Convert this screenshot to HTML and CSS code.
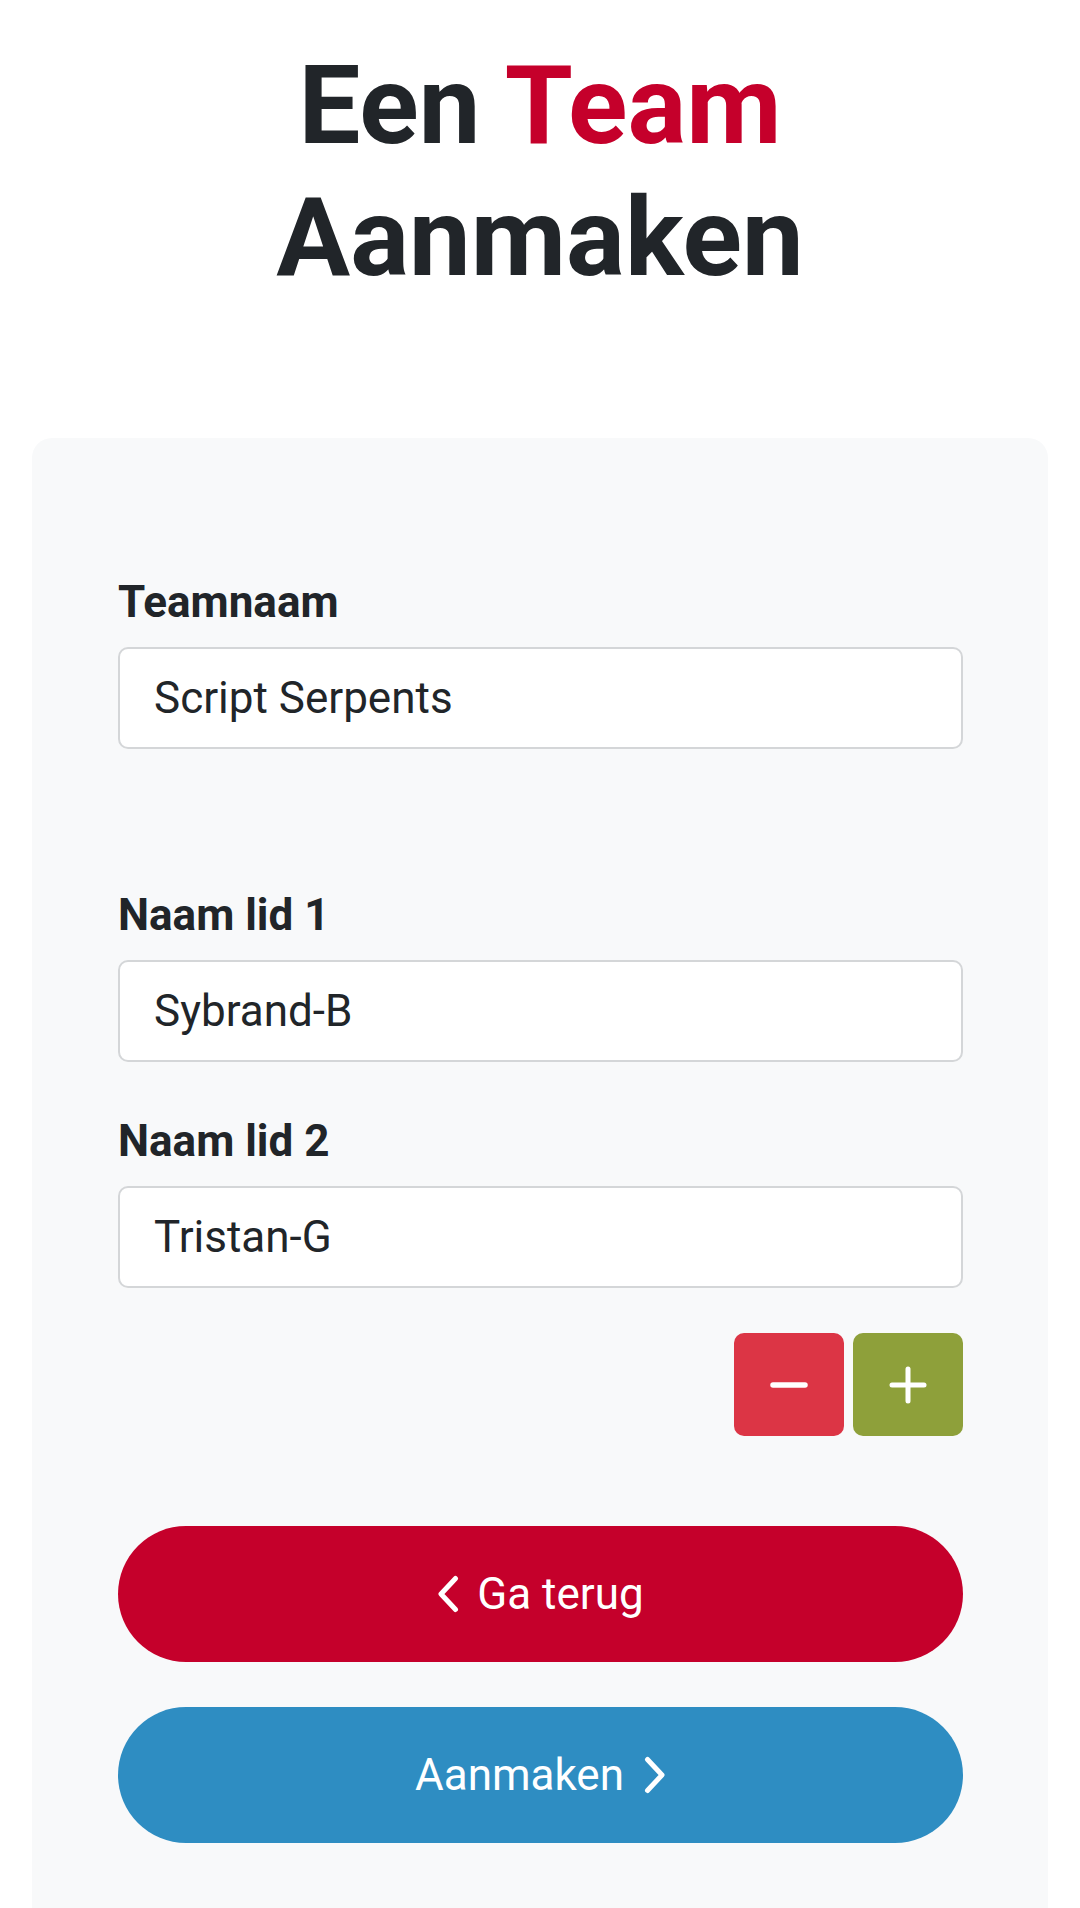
FILE: index.html
```html
<!DOCTYPE html>
<html lang="nl">
<head>
<meta charset="utf-8">
<title>Een Team Aanmaken</title>
<link rel="stylesheet" href="styles.css">
</head>
<body>
<h1 class="title">Een <span class="accent">Team</span><br>Aanmaken</h1>
<main class="card">
  <form class="form">
    <div class="group">
      <label class="label" for="team">Teamnaam</label>
      <input class="field" id="team" type="text" value="Script Serpents">
    </div>
    <div class="group group-first-member">
      <label class="label" for="lid1">Naam lid 1</label>
      <input class="field" id="lid1" type="text" value="Sybrand-B">
    </div>
    <div class="group group-member">
      <label class="label" for="lid2">Naam lid 2</label>
      <input class="field" id="lid2" type="text" value="Tristan-G">
    </div>
    <div class="counter">
      <button type="button" class="square square-minus" aria-label="Verwijder lid">
        <svg width="38" height="8" viewBox="0 0 38 8"><line x1="3" y1="4" x2="35" y2="4" stroke="#fff" stroke-width="5.5" stroke-linecap="round"/></svg>
      </button>
      <button type="button" class="square square-plus" aria-label="Voeg lid toe">
        <svg width="38" height="38" viewBox="0 0 38 38"><line x1="3" y1="19" x2="35" y2="19" stroke="#fff" stroke-width="5" stroke-linecap="round"/><line x1="19" y1="3" x2="19" y2="35" stroke="#fff" stroke-width="5" stroke-linecap="round"/></svg>
      </button>
    </div>
    <button type="button" class="pill pill-back">
      <svg class="chev" width="22" height="38" viewBox="0 0 22 38"><polyline points="18.5,3.5 4,19 18.5,34.5" fill="none" stroke="#fff" stroke-width="5" stroke-linecap="round" stroke-linejoin="round"/></svg>
      <span>Ga terug</span>
    </button>
    <button type="button" class="pill pill-create">
      <span>Aanmaken</span>
      <svg class="chev" width="22" height="38" viewBox="0 0 22 38"><polyline points="3.5,3.5 18,19 3.5,34.5" fill="none" stroke="#fff" stroke-width="5" stroke-linecap="round" stroke-linejoin="round"/></svg>
    </button>
  </form>
</main>
</body>
</html>
```

FILE: styles.css
```css
* { box-sizing: border-box; }

html, body {
  margin: 0;
  padding: 0;
  background: #ffffff;
}

body {
  font-family: Roboto, "Liberation Sans", Arial, sans-serif;
  color: #212529;
  overflow: hidden;
  height: 1908px;
}

.title {
  margin: 40px 0 0;
  font-size: 110px;
  line-height: 132px;
  font-weight: 700;
  text-align: center;
  color: #212529;
}

.accent {
  color: #c5002b;
}

.card {
  margin: 134px 32px 0 32px;
  background: #f8f9fa;
  border-radius: 20px;
  padding: 131px 85px 120px 86px;
}

.form {
  display: flex;
  flex-direction: column;
}

.group {
  display: flex;
  flex-direction: column;
}

.group-first-member {
  margin-top: 133px;
}

.group-member {
  margin-top: 46px;
}

.label {
  font-size: 44px;
  line-height: 66px;
  font-weight: 700;
  margin-bottom: 12px;
  color: #212529;
}

.field {
  width: 100%;
  height: 102px;
  border: 2px solid #d4d6d8;
  border-radius: 10px;
  background: #ffffff;
  padding: 0 34px;
  font-family: Roboto, "Liberation Sans", Arial, sans-serif;
  font-size: 44px;
  line-height: 66px;
  color: #212529;
  outline: none;
}

.counter {
  margin-top: 45px;
  display: flex;
  justify-content: flex-end;
  gap: 9px;
}

.square {
  width: 110px;
  height: 103px;
  border: none;
  border-radius: 10px;
  display: flex;
  align-items: center;
  justify-content: center;
  padding: 0;
}

.square-minus { background: #dc3545; }
.square-plus { background: #8ea03a; }

.pill {
  width: 100%;
  height: 136px;
  border: none;
  border-radius: 68px;
  display: flex;
  align-items: center;
  justify-content: center;
  gap: 18px;
  font-family: Roboto, "Liberation Sans", Arial, sans-serif;
  font-size: 44px;
  line-height: 66px;
  color: #ffffff;
  padding: 0;
}

.pill-back {
  margin-top: 90px;
  background: #c5002b;
}

.pill-create {
  margin-top: 45px;
  background: #2e8dc2;
  gap: 20px;
}

.chev {
  display: block;
}
```
